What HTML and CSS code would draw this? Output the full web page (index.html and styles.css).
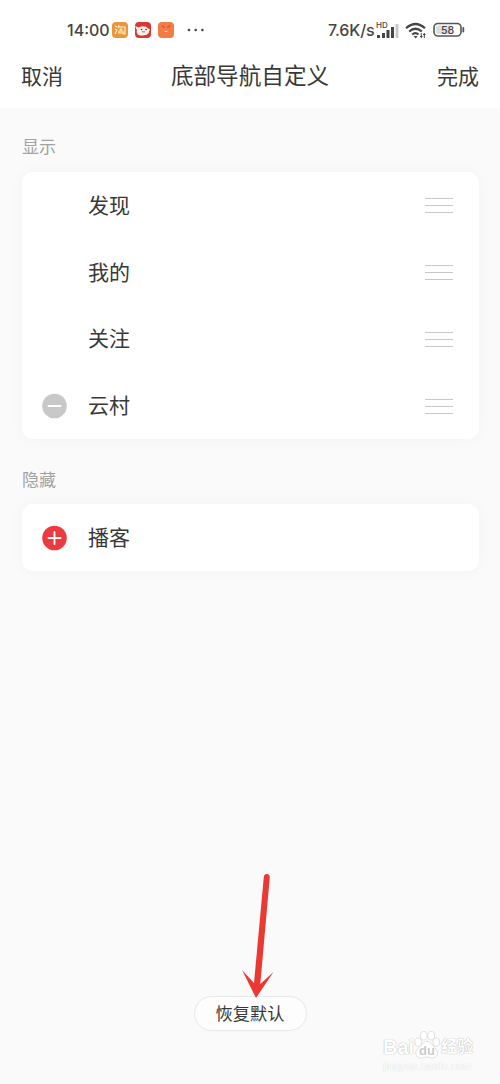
FILE: index.html
```html
<!doctype html>
<html lang="zh-CN">

<head>
	<meta charset="utf-8">
	<title>底部导航自定义</title>
	<link rel="stylesheet" href="styles.css">
</head>

<body>
	<div class="screen">
		<header class="top">
			<div class="status">
				<div class="status-left">
					<span class="clock">14:00</span>
					<svg class="app" viewBox="0 0 16 16">
						<rect width="16" height="16" rx="4" fill="#e9953a" />
						<path d="M3 4l2 1M3 7l2 1-2 4M7 3L6 6M7 5h6v7h-2M7 8h4M9 6v4M7 9v2h4V9" fill="none" stroke="#fff3c9" stroke-width="1.2" />
					</svg>
					<svg class="app" viewBox="0 0 16 16">
						<rect width="16" height="16" rx="4" fill="#d93732" />
						<path d="M0 4l4 1.500c3-2 7-1.500 9 1l2 1-1 2c0 3-4 4-7 4-4 0-6-2-5-5z" fill="#fff1ec" />
						<circle cx="6.500" cy="7.500" r=".8" fill="#422" />
						<circle cx="11" cy="7.500" r=".8" fill="#422" />
						<path d="M7 9.800h3" stroke="#c55" />
					</svg>
					<svg class="app" viewBox="0 0 16 16">
						<rect width="16" height="16" rx="4" fill="#f47b43" />
						<path d="M4 3.500l2.500 2M12 3.500L9.500 5.500" stroke="#c9592b" stroke-width="1.2" />
						<path d="M6.500 9q1.500 1.500 3 0" fill="none" stroke="#ffe0d0" />
					</svg>
					<svg class="more" viewBox="0 0 18 4" fill="#444">
						<circle cx="2" cy="2" r="1.3" />
						<circle cx="8.7" cy="2" r="1.3" />
						<circle cx="15.4" cy="2" r="1.3" />
					</svg>
				</div>
				<div class="status-right">
					<span class="speed">7.6K/s</span>
					<div class="signal">
						<span class="hd">HD</span>
						<svg viewBox="0 0 24 17" fill="#444">
							<rect x="1" y="13" width="3" height="3" />
							<rect x="6" y="11" width="3" height="5" />
							<rect x="10.500" y="8" width="3" height="8" />
							<rect x="15" y="5" width="3" height="11" />
							<rect x="19.500" y="2" width="3" height="14" fill="#c9c9c9" />
						</svg>
					</div>
					<svg class="wifi" viewBox="0 0 22 17" fill="none" stroke="#444" stroke-width="2.2">
						<path d="M1 6.200Q10.500-2.200 20 6.200M4.200 9.500Q10.500 4 16.800 9.500M7.200 12.500Q10.500 9.800 13.500 12.500" />
						<path d="M8.700 14l2 2.500 2-2.500z" fill="#444" stroke="none" />
						<path d="M16.300 11v5M19.300 11v5M15 14.500h2.600M18 12.500h2.600" stroke-width="1" />
					</svg>
					<svg class="battery" viewBox="0 0 32 16">
						<rect x="1" y="1.500" width="27" height="12.500" rx="4" fill="#fff" stroke="#555" stroke-width="1.600" />
						<rect x="3" y="3.500" width="15" height="8.500" rx="2" fill="#ddd" />
						<path d="M30.300 6v3.500" stroke="#555" stroke-width="1.800" stroke-linecap="round" />
						<text x="14.500" y="11.800" text-anchor="middle">58</text>
					</svg>
				</div>
			</div>
			<nav class="bar">
				<span class="action">取消</span>
				<h1>底部导航自定义</h1>
				<span class="action">完成</span>
			</nav>
		</header>

		<main>
			<h2>显示</h2>
			<ul class="card">
				<li>
					<span class="mark"></span>
					<span class="name">发现</span>
					<span class="drag"><i></i><i></i><i></i></span>
				</li>
				<li>
					<span class="mark"></span>
					<span class="name">我的</span>
					<span class="drag"><i></i><i></i><i></i></span>
				</li>
				<li>
					<span class="mark"></span>
					<span class="name">关注</span>
					<span class="drag"><i></i><i></i><i></i></span>
				</li>
				<li>
					<svg class="mark" viewBox="0 0 26 26">
						<circle cx="12.500" cy="13" r="12.300" fill="#c8c8c8" />
						<path d="M6.500 13h12" stroke="#fff" stroke-width="1.800" stroke-linecap="round" />
					</svg>
					<span class="name">云村</span>
					<span class="drag"><i></i><i></i><i></i></span>
				</li>
			</ul>

			<h2 class="hidden-title">隐藏</h2>
			<ul class="card">
				<li>
					<svg class="mark" viewBox="0 0 26 26">
						<circle cx="12.500" cy="13" r="12.300" fill="#ec3b40" />
						<path d="M6.500 13h12M12.500 7v12" stroke="#fff" stroke-width="1.800" stroke-linecap="round" />
					</svg>
					<span class="name">播客</span>
				</li>
			</ul>
		</main>

		<footer>
			<button class="reset" type="button">恢复默认</button>
		</footer>

		<!-- pointer to the reset button -->
		<svg class="arrow" viewBox="0 0 36 128">
			<path d="M22.800 5q.3-3 3-3t3 3L19.300 112l13.200-12L15 126 1 98l12 13z" fill="#ea3932" />
		</svg>

		<div class="watermark">
			<div class="logo">
				<span>Bai</span>
				<svg viewBox="0 0 28 30">
					<g fill="#fff" stroke="#d4d4d4" stroke-width=".8">
						<ellipse cx="4.500" cy="12" rx="3.500" ry="4.500" />
						<ellipse cx="10.500" cy="5" rx="3.700" ry="4.500" />
						<ellipse cx="18.500" cy="5" rx="3.700" ry="4.500" />
						<ellipse cx="24" cy="12" rx="3.500" ry="4.500" />
						<path d="M14 11c4 0 6 5 9 8 5 5 1 10-3 10-3 0-3-1-6-1s-4 1-7 1c-5 0-7-6-3-10 4-3 6-8 10-8z" />
					</g>
					<text x="14" y="26" text-anchor="middle">du</text>
				</svg>
				<span class="cn">经验</span>
			</div>
			<div class="site">jingyan.baidu.com</div>
		</div>
	</div>
</body>

</html>
```
FILE: styles.css
```css
* {
	box-sizing: border-box;
}
html,
body {
	margin: 0;
	padding: 0;
}
body {
	font-family: "Noto Sans CJK SC", "Noto Sans", sans-serif;
	color: #383838;
}
.screen {
	position: relative;
	display: flex;
	flex-direction: column;
	width: 500px;
	height: 1084px;
	overflow: hidden;
	background: #fafafa;
}
.top {
	height: 108px;
	background: #fff;
}
.status {
	display: flex;
	justify-content: space-between;
	height: 43px;
	padding: 16px 35px 0 67px;
	font-family: Inter, "Noto Sans", sans-serif;
	font-weight: 500;
	color: #444;
}
.status-left,
.status-right {
	display: flex;
	align-items: center;
	height: 28px;
}
.clock {
	width: 45px;
	font-size: 16px;
	white-space: nowrap;
}
.app {
	width: 16px;
	height: 16px;
	margin-right: 7px;
}
.more {
	width: 18px;
	height: 4px;
	margin-left: 6px;
}
.speed {
	width: 48px;
	font-size: 16px;
	letter-spacing: -0.100px;
	white-space: nowrap;
}
.signal {
	position: relative;
	width: 24px;
	height: 17px;
}
.signal svg {
	display: block;
	width: 24px;
	height: 17px;
}
.hd {
	position: absolute;
	top: -1px;
	left: 0;
	font-size: 8px;
	line-height: 9px;
}
.wifi {
	width: 22px;
	height: 17px;
	margin: 0 6px 0 5px;
}
.battery {
	width: 32px;
	height: 16px;
}
.battery text {
	font: 500 10.500px Inter, sans-serif;
	fill: #444;
}
.bar {
	display: flex;
	align-items: center;
	justify-content: space-between;
	height: 64px;
	padding: 0 21px;
}
.bar h1 {
	margin: 0;
	font-size: 22.600px;
	font-weight: 400;
	line-height: 64px;
}
.action {
	font-size: 21px;
}
main {
	flex: 1;
	padding: 25px 21px 0 22px;
}
h2 {
	margin: 0 0 13px;
	font-size: 17px;
	font-weight: 400;
	line-height: 26px;
	color: #a2a2a2;
}
.hidden-title {
	margin: 27px 0 12px;
}
.card {
	margin: 0;
	padding: 0;
	list-style: none;
	background: #fff;
	border-radius: 11px;
	box-shadow: 0 0 16px rgba(0, 0, 0, 0.03);
}
.card li {
	display: flex;
	align-items: center;
	height: 66.800px;
	padding: 0 26px 0 20px;
}
.mark {
	width: 26px;
	height: 26px;
	margin-right: 20px;
}
.name {
	flex: 1;
	padding-bottom: 3px;
	font-size: 21px;
	line-height: 30px;
}
.drag {
	display: flex;
	flex-direction: column;
	gap: 6px;
	width: 28px;
	padding-top: 1px;
}
.drag i {
	height: 1px;
	background: #c8c8c8;
}
footer {
	display: flex;
	justify-content: center;
	padding-bottom: 53px;
}
.reset {
	width: 113px;
	height: 35px;
	padding: 0 0 2px;
	border: 1px solid #e8e8e8;
	border-radius: 18px;
	background: #fdfdfd;
	font: inherit;
	font-size: 17.200px;
	line-height: 31px;
	color: #383838;
}
.arrow {
	position: absolute;
	top: 872px;
	left: 241px;
	width: 36px;
	height: 128px;
}
.watermark {
	position: absolute;
	top: 1030px;
	left: 383px;
	width: 92px;
	color: #fff;
	text-shadow: 0 0 1px #aaa, 0 0 1px #ccc;
	font-family: "Liberation Sans", "Noto Sans CJK SC", sans-serif;
}
.logo {
	display: flex;
	align-items: flex-end;
	height: 30px;
	font-size: 20px;
	font-weight: 700;
	line-height: 26px;
}
.logo svg {
	flex: none;
	width: 26px;
	height: 30px;
}
.logo text {
	font: 700 14px "Liberation Sans", sans-serif;
	fill: #ccc;
	text-shadow: none;
}
.cn {
	margin-left: 1px;
	font-size: 16px;
	white-space: nowrap;
}
.site {
	font-size: 11px;
	line-height: 12px;
	white-space: nowrap;
	text-shadow: 0 0 1px #ccc;
}
```
